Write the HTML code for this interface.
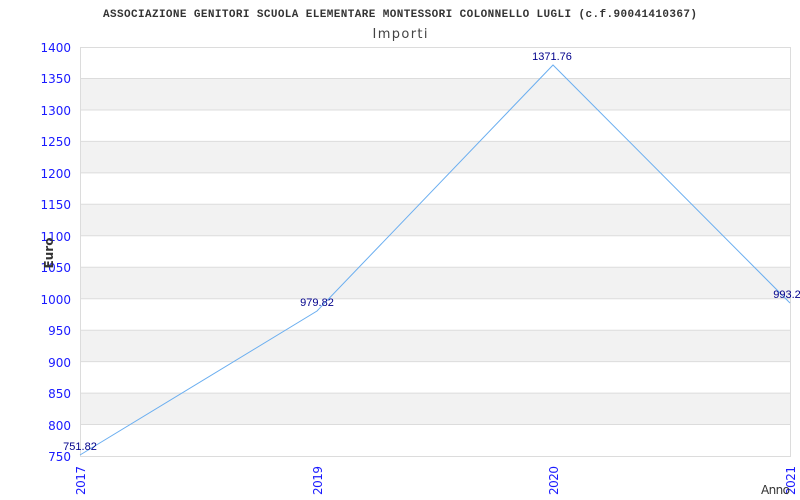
<!DOCTYPE html>
<html><head><meta charset="utf-8"><style>
html,body{margin:0;padding:0;background:#fff;}
svg{display:block;}
</style></head><body>
<svg width="800" height="500" xmlns="http://www.w3.org/2000/svg">
<rect width="800" height="500" fill="#fff"/>
<g fill="#f2f2f2">
<rect x="80" y="78.5" width="710" height="31.5"/>
<rect x="80" y="141.4" width="710" height="31.5"/>
<rect x="80" y="204.3" width="710" height="31.5"/>
<rect x="80" y="267.2" width="710" height="31.5"/>
<rect x="80" y="330.2" width="710" height="31.5"/>
<rect x="80" y="393.1" width="710" height="31.5"/>
</g>
<g stroke="#dcdcdc" stroke-width="1">
<line x1="80" y1="47.5" x2="790" y2="47.5"/>
<line x1="80" y1="78.5" x2="790" y2="78.5"/>
<line x1="80" y1="110" x2="790" y2="110"/>
<line x1="80" y1="141.4" x2="790" y2="141.4"/>
<line x1="80" y1="172.9" x2="790" y2="172.9"/>
<line x1="80" y1="204.3" x2="790" y2="204.3"/>
<line x1="80" y1="235.8" x2="790" y2="235.8"/>
<line x1="80" y1="267.2" x2="790" y2="267.2"/>
<line x1="80" y1="298.7" x2="790" y2="298.7"/>
<line x1="80" y1="330.2" x2="790" y2="330.2"/>
<line x1="80" y1="361.6" x2="790" y2="361.6"/>
<line x1="80" y1="393.1" x2="790" y2="393.1"/>
<line x1="80" y1="424.5" x2="790" y2="424.5"/>
<line x1="80" y1="456.5" x2="790" y2="456.5"/>
<line x1="80.5" y1="47" x2="80.5" y2="457"/>
<line x1="790.5" y1="47" x2="790.5" y2="457"/>
</g>
<polyline points="80,455 317,311 553,65 790,303" fill="none" stroke="#6aaef0" stroke-width="1"/>
<text x="400" y="17" font-family="Liberation Mono, monospace" font-weight="bold" font-size="11" fill="#333" text-anchor="middle" textLength="594" lengthAdjust="spacing">ASSOCIAZIONE GENITORI SCUOLA ELEMENTARE MONTESSORI COLONNELLO LUGLI (c.f.90041410367)</text>
<text x="400" y="38" font-family="DejaVu Sans, sans-serif" font-size="13" fill="#444" text-anchor="middle" textLength="55" lengthAdjust="spacing">Importi</text>
<g font-family="DejaVu Sans, sans-serif" font-size="12" fill="#1a1aff" text-anchor="end">
<text x="71" y="52">1400</text><text x="71" y="83">1350</text><text x="71" y="115">1300</text>
<text x="71" y="146">1250</text><text x="71" y="178">1200</text><text x="71" y="209">1150</text>
<text x="71" y="241">1100</text><text x="71" y="272">1050</text><text x="71" y="304">1000</text>
<text x="71" y="335">950</text><text x="71" y="367">900</text><text x="71" y="398">850</text>
<text x="71" y="430">800</text><text x="71" y="461">750</text>
</g>
<g font-family="DejaVu Sans, sans-serif" font-size="12" fill="#1a1aff" text-anchor="end">
<text transform="translate(85,466) rotate(-90)" textLength="29" lengthAdjust="spacing">2017</text>
<text transform="translate(322,466) rotate(-90)" textLength="29" lengthAdjust="spacing">2019</text>
<text transform="translate(558,466) rotate(-90)" textLength="29" lengthAdjust="spacing">2020</text>
<text transform="translate(795,466) rotate(-90)" textLength="29" lengthAdjust="spacing">2021</text>
</g>
<text transform="translate(53,253) rotate(-90)" font-family="DejaVu Sans, sans-serif" font-weight="bold" font-size="12" fill="#333" text-anchor="middle">Euro</text>
<text x="761" y="494" font-family="DejaVu Sans, sans-serif" font-size="12" fill="#333" textLength="29" lengthAdjust="spacing">Anno</text>
<g font-family="Liberation Sans, sans-serif" font-size="11" fill="#00008b" text-anchor="middle">
<text x="80" y="450">751.82</text>
<text x="317" y="306">979.82</text>
<text x="552" y="60">1371.76</text>
<text x="787" y="298">993.2</text>
</g>
</svg>
</body></html>
